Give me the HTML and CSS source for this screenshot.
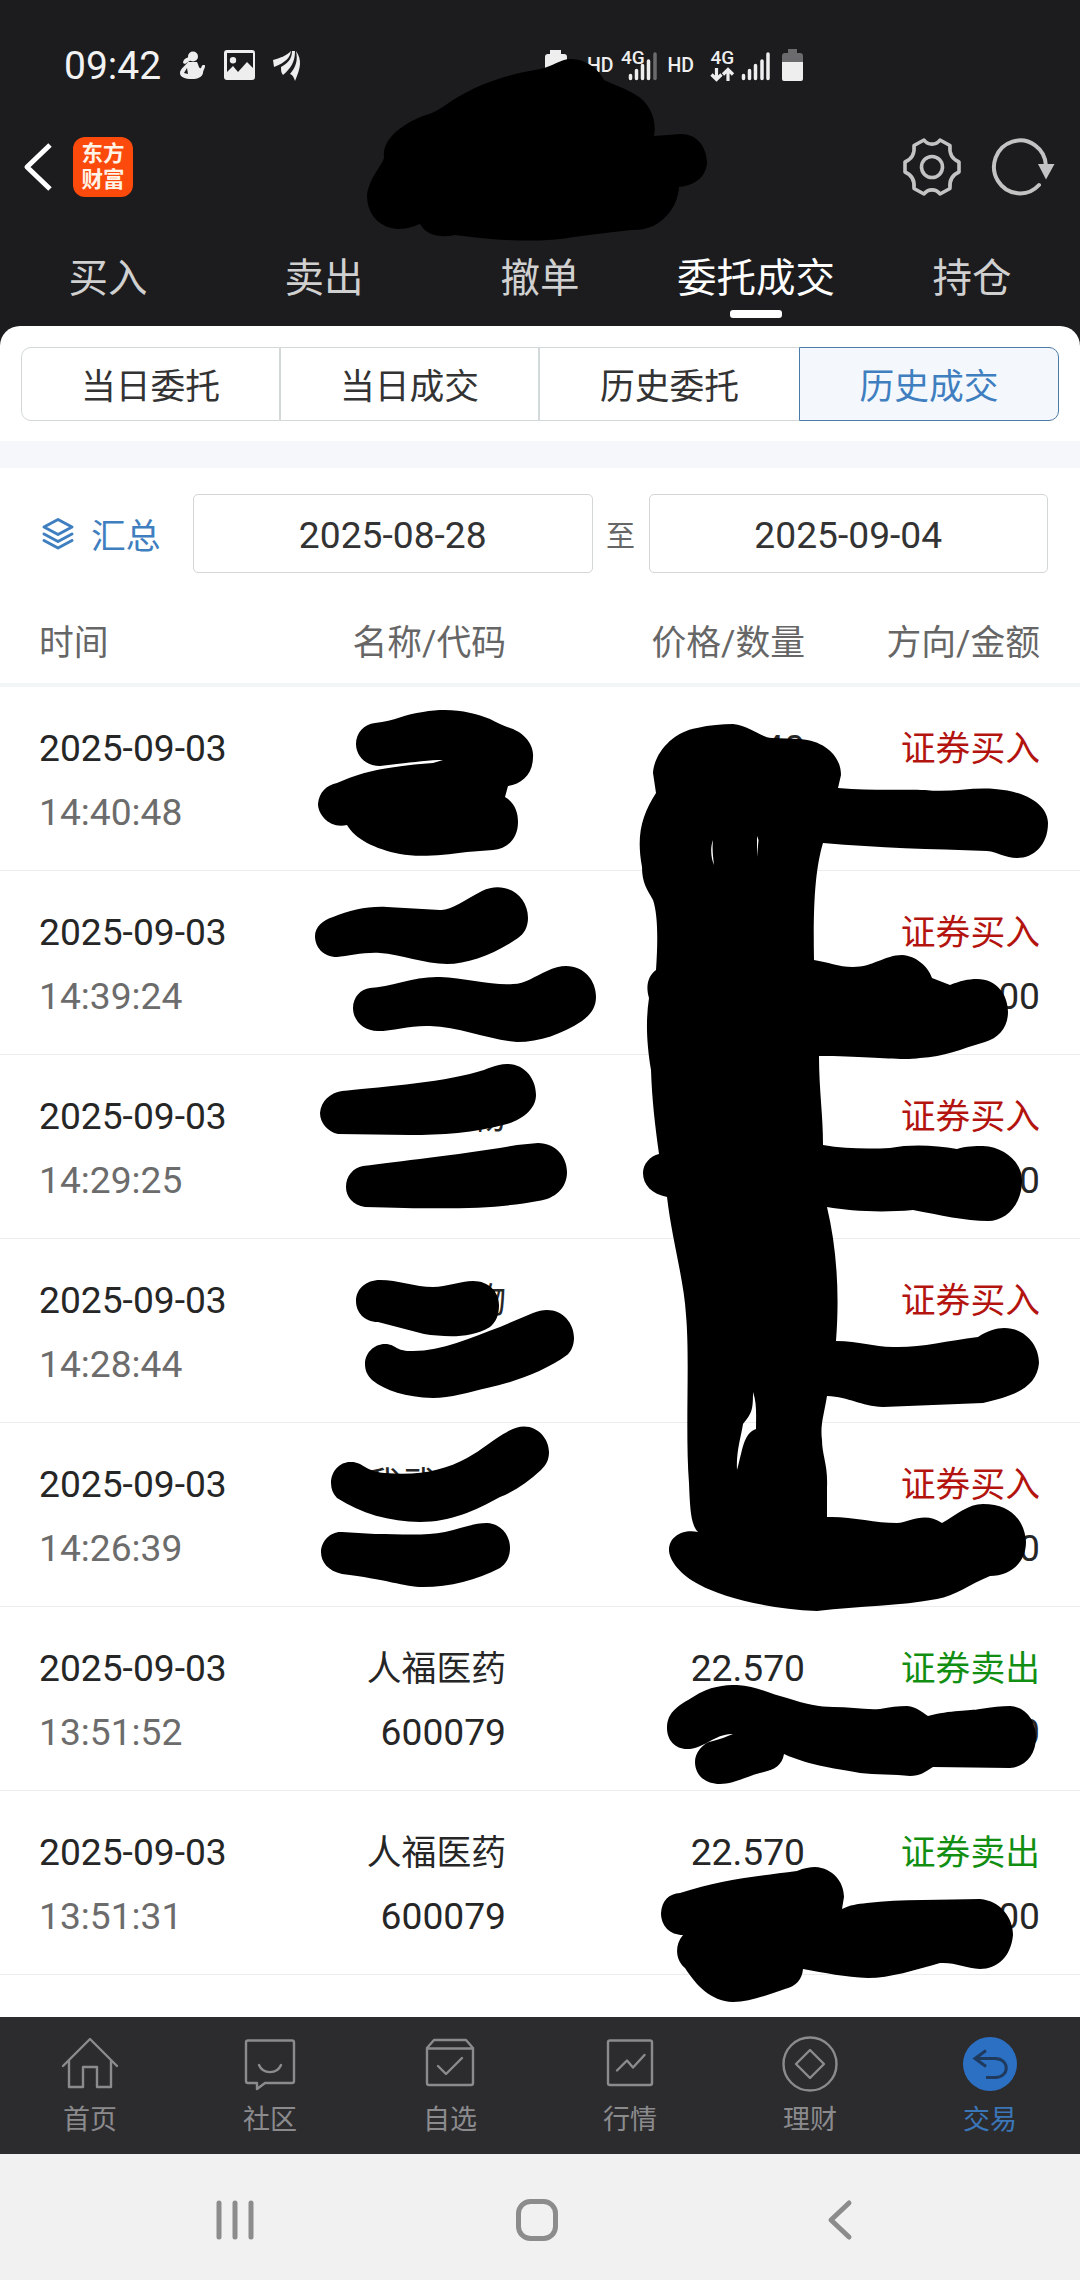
FILE: index.html
```html
<!DOCTYPE html>
<html lang="zh-CN">
<head>
    <meta charset="UTF-8">
    <meta name="viewport" content="width=device-width, initial-scale=1.0">
    <title>历史成交</title>
    <link rel="stylesheet" href="styles.css">
</head>
<body>
    <div class="screen">
        <div class="top">
            <div class="status-bar">
                <span class="clock">09:42</span>
                <svg class="status-left" width="124" height="36" viewBox="178 48 124 36">
                    <g fill="#eeeeee">
                        <circle cx="193" cy="56.500" r="5"/>
                        <path d="M189 57c-4 1-6 3-6 6l2 1 6-4z"/>
                        <path fill-rule="evenodd" d="M188 62h9c2 4 2 7 4 6 1-1 0-3 3-3s-1 5-1 8c-1 4-5 6-11 6-7 0-12-2-12-6 0-4 5-7 8-11zM187 68l-3 5 4 1z"/>
                        <path fill-rule="evenodd" d="M227 50h25q3 0 3 3v24q0 3-3 3h-25q-3 0-3-3V53q0-3 3-3zm0 3v19l6-6 5 6 9-10 6 6V53zM233 57a3.200 3.200 0 1 1 0 6.400a3.200 3.200 0 1 1 0-6.400z"/>
                        <path d="M273 60c7-2 13-4 18-9-1 7-5 11-17 16z"/>
                        <path d="M281 67c7-4 11-8 11-16l3 0c0 11-4 17-12 24-2-2-2-5-2-8z"/>
                        <path d="M296 51c6 9 5 16-1 30-1-3-2-6-5-7 6-7 8-14 6-23z"/>
                    </g>
                </svg>
                <svg class="status-right" width="266" height="36" viewBox="540 48 266 36">
                    <path fill="#eeeeee" d="M550 50h11v4h3q3 0 3 3v12h-22V57q0-3 3-3h2z"/>
                    <g class="status-text">
                        <text x="587" y="72" font-size="19.500">HD</text>
                        <text x="621" y="63.500" font-size="19">4G</text>
                        <text x="667.500" y="72" font-size="19.500">HD</text>
                        <text x="710.500" y="63.500" font-size="19">4G</text>
                    </g>
                    <path fill="none" stroke="#eeeeee" stroke-width="3.500" stroke-linecap="round" d="M630.500 75.500v3M636.500 70.500v8M642.500 65.500v13M648.500 61v17.500M743.500 75.500v3M749.500 70.500v8M755.500 65.500v13M762 61v17.500M768 54v24.500"/>
                    <path stroke="#6b6b6d" stroke-width="3.500" stroke-linecap="round" d="M655 54v24.500"/>
                    <path fill="none" stroke="#eeeeee" stroke-width="3.200" d="M716.500 68v11M711.500 74.500l5 5 5-5M728 81V70M723 74.500l5-5 5 5"/>
                    <path fill="#6b6b6d" d="M788 49h9v4h3q3 0 3 3v7h-21v-7q0-3 3-3h3z"/>
                    <path fill="#eeeeee" d="M782 62h21v17q0 2-2 2h-17q-2 0-2-2z"/>
                </svg>
            </div>
            <div class="title-bar">
                <svg width="30" height="52" viewBox="23 141 30 52">
                    <path fill="none" stroke="#ffffff" stroke-width="5" stroke-linejoin="round" d="M50 145L27 167l23 22"/>
                </svg>
                <div class="logo"><span>东方</span><span>财富</span></div>
                <svg class="gear" width="62" height="62" viewBox="-31 -31 62 62">
                    <g fill="none" stroke="#c3c3c3" stroke-width="3.600" stroke-linejoin="round">
                        <path d="M-8-27C-4-21.500 4-21.500 8-27L18-21.500C17-13 20-8 27-5V5C20 8 17 13 18 21.500L8 27C4 21.500-4 21.500-8 27L-18 21.500C-17 13-20 8-27 5V-5C-20-8-17-13-18-21.500Z"/>
                        <circle r="10.500"/>
                    </g>
                </svg>
                <svg class="refresh" width="66" height="62" viewBox="-31 -31 66 62">
                    <path fill="none" stroke="#c3c3c3" stroke-width="4" stroke-linecap="round" d="M26-1A26 26.500 0 1 0 19 18"/>
                    <path fill="#c3c3c3" d="M18-3h16.500L26 12.500z"/>
                </svg>
            </div>
            <div class="tabs">
                <div class="tab">买入</div>
                <div class="tab">卖出</div>
                <div class="tab">撤单</div>
                <div class="tab active">委托成交</div>
                <div class="tab">持仓</div>
            </div>
        </div>

        <div class="panel">
            <div class="segments">
                <div class="segment">当日委托</div>
                <div class="segment">当日成交</div>
                <div class="segment">历史委托</div>
                <div class="segment active">历史成交</div>
            </div>
        </div>
        <div class="strip"></div>

        <div class="filter">
            <svg width="34" height="34" viewBox="0 0 34 34">
                <path fill="none" stroke="#3f7fc0" stroke-width="3" stroke-linejoin="round" stroke-linecap="round" d="M17 2.500L31 10 17 17.500 3 10zM3 17l14 7.500L31 17M3 23.500L17 31l14-7.500"/>
            </svg>
            <span class="summary">汇总</span>
            <div class="date-box">2025-08-28</div>
            <span class="to">至</span>
            <div class="date-box">2025-09-04</div>
        </div>

        <div class="list-head">
            <span>时间</span>
            <span>名称/代码</span>
            <span>价格/数量</span>
            <span>方向/金额</span>
        </div>

        <div class="list">
            <div class="row">
                <div class="cell"><p>2025-09-03</p><p class="time">14:40:48</p></div>
                <div class="cell"></div>
                <div class="cell"><p>40</p></div>
                <div class="cell"><p class="buy">证券买入</p></div>
            </div>
            <div class="row">
                <div class="cell"><p>2025-09-03</p><p class="time">14:39:24</p></div>
                <div class="cell"></div>
                <div class="cell"></div>
                <div class="cell"><p class="buy">证券买入</p><p>00</p></div>
            </div>
            <div class="row">
                <div class="cell"><p>2025-09-03</p><p class="time">14:29:25</p></div>
                <div class="cell"><p class="cn">物</p></div>
                <div class="cell"></div>
                <div class="cell"><p class="buy">证券买入</p><p>0</p></div>
            </div>
            <div class="row">
                <div class="cell"><p>2025-09-03</p><p class="time">14:28:44</p></div>
                <div class="cell"><p class="cn">物</p></div>
                <div class="cell"></div>
                <div class="cell"><p class="buy">证券买入</p></div>
            </div>
            <div class="row">
                <div class="cell"><p>2025-09-03</p><p class="time">14:26:39</p></div>
                <div class="cell"><p class="cn lead">我武</p></div>
                <div class="cell"></div>
                <div class="cell"><p class="buy">证券买入</p><p>0</p></div>
            </div>
            <div class="row">
                <div class="cell"><p>2025-09-03</p><p class="time">13:51:52</p></div>
                <div class="cell"><p class="cn">人福医药</p><p>600079</p></div>
                <div class="cell"><p>22.570</p></div>
                <div class="cell"><p class="sell">证券卖出</p><p>0</p></div>
            </div>
            <div class="row">
                <div class="cell"><p>2025-09-03</p><p class="time">13:51:31</p></div>
                <div class="cell"><p class="cn">人福医药</p><p>600079</p></div>
                <div class="cell"><p>22.570</p></div>
                <div class="cell"><p class="sell">证券卖出</p><p>00</p></div>
            </div>
        </div>

        <div class="bottom-nav">
            <div class="nav-item">
                <svg width="60" height="60" viewBox="-30 -30 60 60">
                    <path d="M-27 2L0-25 27 2M-21-3V23H-7V3H7V23H21V-3"/>
                </svg>
                <span>首页</span>
            </div>
            <div class="nav-item">
                <svg width="60" height="60" viewBox="-30 -30 60 60">
                    <path d="M-22-23.500H22q2 0 2 2V17q0 2-2 2H-5l-8 6v-6H-22q-2 0-2-2V-21.500q0-2 2-2zM-11 1C-7 10.500 7 10.500 11 1"/>
                </svg>
                <span>社区</span>
            </div>
            <div class="nav-item">
                <svg width="60" height="60" viewBox="-30 -30 60 60">
                    <path d="M-23-16V19q0 2 2 2H21q2 0 2-2V-16L16-24H-16zM-23-15.500H23M-12 2L-4 10 12-6"/>
                </svg>
                <span>自选</span>
            </div>
            <div class="nav-item">
                <svg width="60" height="60" viewBox="-30 -30 60 60">
                    <path d="M-20-23.500H20q2 0 2 2V19q0 2-2 2H-20q-2 0-2-2V-21.500q0-2 2-2zM-13 6.500L-3-3.500 3 3.500 14.500-9"/>
                </svg>
                <span>行情</span>
            </div>
            <div class="nav-item">
                <svg width="60" height="60" viewBox="-30 -30 60 60">
                    <circle cy="0" r="26.500"/>
                    <path d="M0-14L14 0 0 14-14 0z"/>
                </svg>
                <span>理财</span>
            </div>
            <div class="nav-item active">
                <svg width="60" height="60" viewBox="-30 -30 60 60">
                    <circle class="disc" cy="0" r="27"/>
                    <path class="arrow" d="M-4-13.500L-15-5.500-4 2.500M-15-5.500H5C20-5.500 20 13.500 5 13.500H-4"/>
                </svg>
                <span>交易</span>
            </div>
        </div>

        <div class="system-nav">
            <svg width="44" height="44" viewBox="-22 -22 44 44">
                <path d="M-16-17V17M0-17V17M16-17V17"/>
            </svg>
            <svg width="44" height="44" viewBox="-22 -22 44 44">
                <rect x="-18.500" y="-18.500" width="37" height="37" rx="12"/>
            </svg>
            <svg width="44" height="44" viewBox="-22 -22 44 44">
                <path d="M10-17L-8 0 10 17"/>
            </svg>
        </div>

        <!-- marker strokes hiding private values -->
        <svg class="marker" width="1080" height="2280" viewBox="0 0 1080 2280">
            <path d="M540 69C500 76 478 85 458 97C446 104 440 110 429 114C398 124 382 142 384 157C384 164 370 175 367 195C367 220 386 229 399 229C408 229 414 226 420 224C427 236 441 238 455 235C499 241 540 243 574 237C594 234 615 232 631 230C660 232 678 208 679 187C700 185 707 172 707 162C706 145 696 134 681 134L654 136C657 120 650 103 636 95C625 88 612 84 604 80C598 68 585 59 571 59C560 59 552 67 540 69Z"/>
            <path d="M375 723C395 721 405 714 423 712C450 707 473 712 490 719C496 722 504 726 510 728C528 734 534 748 533 757C533 774 522 784 508 786L505 797C515 803 518 813 518 822C518 838 508 849 493 850L467 852C440 856 415 857 400 854C375 849 355 839 347 825C330 829 318 815 318 804C319 792 327 785 337 783C360 773 380 767 433 763L443 760C425 760 400 764 380 766C366 766 356 756 356 744C356 733 364 724 375 723Z"/>
            <path d="M333 917C350 910 368 906 387 907L440 910C450 911 465 900 482 891C505 880 528 895 528 918C528 927 524 934 518 938C495 954 468 964 447 964C425 964 400 954 380 953C365 952 348 956 337 957C323 957 315 947 315 936C315 927 323 920 333 917Z"/>
            <path d="M370 988C390 987 415 976 440 977C465 978 495 986 513 984C525 984 535 976 547 971C575 957 596 975 596 997C596 1008 590 1015 582 1021C562 1034 540 1042 517 1042C490 1040 460 1027 430 1026C412 1025 393 1031 378 1031C363 1031 353 1020 353 1008C353 997 361 989 370 988Z"/>
            <path d="M342 1091C370 1088 440 1083 477 1072C486 1070 496 1064 507 1064C525 1064 536 1079 536 1095C536 1108 524 1119 507 1124C475 1133 440 1135 410 1135L338 1134C328 1132 320 1123 320 1113C321 1101 330 1093 342 1091Z"/>
            <path d="M363 1166C400 1161 460 1155 517 1145L538 1143C556 1143 567 1157 567 1172C567 1188 555 1199 538 1201C500 1208 460 1210 365 1207C353 1205 346 1197 346 1187C346 1176 353 1168 363 1166Z"/>
            <path d="M380 1280C398 1280 415 1287 433 1287C447 1287 460 1281 473 1281C489 1281 499 1292 499 1305C499 1315 496 1322 490 1327C470 1339 445 1337 424 1334L378 1322C364 1322 356 1312 356 1301C356 1289 366 1280 380 1280Z"/>
            <path d="M385 1344C395 1344 396 1351 410 1351C440 1352 470 1338 500 1327L533 1313C557 1303 574 1320 574 1338C574 1345 571 1352 567 1355C545 1371 515 1382 487 1388C470 1392 450 1398 433 1398C405 1397 386 1391 372 1380C367 1375 365 1370 365 1364C365 1353 374 1344 385 1344Z"/>
            <path d="M350 1462C362 1461 366 1472 385 1473C420 1476 445 1470 467 1458C482 1450 495 1438 507 1432C530 1417 549 1435 549 1452C549 1460 546 1465 541 1470C528 1482 515 1491 500 1497C475 1511 450 1522 420 1522C390 1522 360 1513 337 1498C333 1494 331 1489 331 1483C331 1471 340 1462 350 1462Z"/>
            <path d="M342 1532L375 1534C400 1534 425 1536 445 1532C460 1529 473 1523 487 1523C502 1524 510 1536 510 1548C510 1557 506 1564 500 1568C477 1580 450 1587 423 1587C405 1587 385 1579 342 1574C328 1571 321 1562 321 1552C321 1541 331 1531 342 1532Z"/>
            <path fill-rule="evenodd" d="M653 773C654 754 672 732 697 728C710 725 722 724 733 724C750 726 760 737 772 738L800 739C826 741 841 757 841 775L838 788C875 791 905 789 925 790C950 793 970 787 995 789C1033 792 1048 809 1048 823C1048 845 1034 858 1017 858C1005 858 998 852 987 851C930 849 880 848 823 843C815 870 813 905 814 960C828 962 838 967 853 967C873 967 885 955 902 955C916 956 928 966 932 978L950 985C960 981 968 979 977 979C997 979 1008 995 1008 1012C1008 1027 999 1038 985 1042C960 1049 945 1057 920 1058C900 1061 870 1056 819 1056C819 1090 823 1115 823 1145C845 1149 870 1149 890 1148C910 1144 935 1145 957 1149C966 1146 975 1146 983 1146C1005 1147 1022 1163 1022 1180C1022 1205 1006 1221 988 1221C965 1221 940 1215 913 1210C880 1213 850 1211 827 1207C836 1245 840 1290 836 1341C860 1341 873 1347 893 1347C920 1348 945 1341 978 1337C1010 1315 1039 1337 1039 1363C1037 1387 1015 1396 983 1403L883 1407C860 1406 850 1397 827 1396C824 1415 820 1425 822 1440C822 1455 828 1465 827 1487V1517C850 1516 875 1523 897 1523C910 1522 925 1511 942 1523C956 1515 968 1504 983 1504C1012 1504 1025 1522 1026 1542C1026 1563 1010 1576 990 1576C970 1584 955 1596 937 1599C900 1606 860 1606 817 1611C765 1609 720 1596 700 1585C680 1575 669 1560 669 1550C669 1537 682 1529 698 1532C691 1525 690 1510 689 1483C685 1430 690 1360 686 1315C684 1280 672 1240 667 1197C652 1194 643 1185 643 1173C643 1164 650 1156 659 1154C655 1125 652 1100 651 1070C646 1040 646 1018 649 998C645 985 649 975 656 970C658 940 658 915 653 900C647 889 642 883 642 867C636 835 642 815 656 793Z
                M713 840C710 848 711 858 714 865C713 856 712 849 713 840ZM757 836V857L758.500 840ZM753 1392C757 1403 756 1416 756 1429C743 1434 743 1449 737 1470C736 1452 741 1437 743 1424C752 1413 753 1410 753 1392Z"/>
            <path d="M667 1728C667 1711 680 1705 693 1697C710 1686 724 1685 737 1685C757 1686 772 1695 787 1698C805 1704 820 1707 833 1707C850 1707 865 1710 880 1709C890 1707 898 1706 907 1706C917 1707 923 1713 928 1716C950 1710 970 1711 980 1709C992 1707 1002 1706 1010 1706C1027 1707 1036 1722 1036 1737C1036 1755 1025 1767 1010 1768L933 1767C925 1772 920 1776 910 1776C895 1774 875 1775 860 1773C840 1769 810 1766 784 1754C782 1766 774 1770 760 1773C745 1777 733 1784 720 1784C705 1784 695 1775 695 1762C695 1753 702 1743 713 1741C720 1739 726 1737 733 1734C716 1733 704 1749 687 1749C675 1749 667 1740 667 1728Z"/>
            <path d="M661 1913C662 1900 669 1894 680 1893C720 1880 750 1877 797 1871C804 1868 810 1867 815 1867C833 1868 844 1882 844 1897L842 1909C850 1905 857 1904 867 1903C900 1899 945 1900 980 1899C1001 1901 1013 1918 1013 1935C1011 1957 997 1969 980 1969C965 1968 955 1962 940 1963C915 1970 890 1978 868 1978C845 1977 825 1973 803 1969C802 1980 796 1986 785 1989C767 1995 750 2002 733 2002C710 2001 696 1985 685 1968C677 1962 673 1947 683 1935C670 1935 661 1926 661 1913Z"/>
        </svg>
    </div>
</body>
</html>
```
FILE: styles.css
```css
* {
    box-sizing: border-box;
}

body {
    margin: 0;
    font-family: Roboto, "Noto Sans CJK SC", sans-serif;
    background-color: #ffffff;
    color: #262626;
}

p {
    margin: 0;
}

svg {
    display: block;
    flex: none;
    overflow: visible;
}

.screen {
    position: relative;
    width: 1080px;
    height: 2280px;
    display: flex;
    flex-direction: column;
    overflow: hidden;
}

/* dark header */
.top {
    height: 346px;
    margin-bottom: -20px;
    background-color: #1c1c1e;
}

.status-bar {
    height: 132px;
    padding-left: 64px;
    display: flex;
    align-items: center;
}

.clock {
    width: 114px;
    font-size: 39px;
    color: #f2f2f2;
}

.status-right {
    margin-left: 238px;
}

.status-text {
    fill: #eeeeee;
    font-weight: 500;
}

.title-bar {
    height: 70px;
    padding-left: 23px;
    display: flex;
    align-items: center;
}

.logo {
    width: 60px;
    height: 60px;
    margin-left: 20px;
    padding-top: 4px;
    border-radius: 12px;
    background-color: #fb4a0c;
    color: #fff3e8;
    font-size: 21.5px;
    font-weight: 700;
    line-height: 26px;
    text-align: center;
}

.logo span {
    display: block;
}

.gear {
    margin-left: 768px;
}

.refresh {
    margin-left: 26px;
}

.tabs {
    height: 124px;
    display: flex;
}

.tab {
    flex: 1;
    display: flex;
    flex-direction: column;
    align-items: center;
    padding-top: 52px;
    font-size: 39.5px;
    line-height: 50px;
    color: #d0d0d0;
}

.tab.active {
    color: #ffffff;
}

.tab.active::after {
    content: "";
    width: 52px;
    height: 8px;
    margin-top: 6px;
    border-radius: 3px;
    background-color: #ffffff;
}

/* sub tabs */
.panel {
    height: 115px;
    padding: 21px 21px 0;
    border-radius: 20px 20px 0 0;
    background-color: #ffffff;
}

.segments {
    display: grid;
    grid-template-columns: 259px 259px 260px 260px;
    height: 74px;
}

.segment {
    display: flex;
    align-items: center;
    justify-content: center;
    border: 1px solid #d3d8d8;
    font-size: 34.8px;
    color: #333333;
}

.segment:first-child {
    border-radius: 10px 0 0 10px;
}

.segment:nth-child(3) {
    border-right: none;
}

.segment.active {
    border-color: #4a7ba6;
    border-radius: 0 10px 10px 0;
    background-color: #f4f8fd;
    color: #3f7fc0;
}

.strip {
    height: 27px;
    background-color: #f6f7fa;
}

/* date filter */
.filter {
    height: 131px;
    padding: 0 32px 0 41px;
    display: flex;
    align-items: center;
}

.summary {
    width: 102px;
    margin-left: 16px;
    font-size: 34.8px;
    color: #3f7fc0;
}

.date-box {
    flex: 1;
    height: 79px;
    border: 1px solid #d3d6d6;
    border-radius: 5px;
    font-size: 37.2px;
    line-height: 80px;
    text-align: center;
    color: #333333;
}

.to {
    width: 56px;
    font-size: 29px;
    text-align: center;
    color: #666666;
}

/* trade list */
.list-head,
.row {
    display: grid;
    grid-template-columns: 227px 240px 299px 235px;
    padding-left: 39px;
}

.list-head {
    height: 88px;
    padding-top: 19px;
    border-bottom: 4px solid #f3f6f7;
    font-size: 34.8px;
    line-height: 50px;
    color: #666666;
}

.list-head span + span,
.cell + .cell {
    text-align: right;
}

.row {
    height: 184px;
    padding-top: 29px;
    border-bottom: 1px solid #ececec;
}

.cell p {
    height: 64px;
    font-size: 37.2px;
    line-height: 64px;
    white-space: nowrap;
}

.cell .time {
    color: #6c6c6c;
}

.cell .cn,
.cell .buy,
.cell .sell {
    font-size: 34.8px;
    line-height: 66px;
}

.cell .lead {
    padding-right: 70px;
}

.cell .buy {
    color: #b3140f;
}

.cell .sell {
    color: #128f12;
}

.list {
    height: 1330px;
}

.bottom-nav {
    height: 137px;
    display: flex;
    background-color: #2c2c2e;
}

.nav-item {
    flex: 1;
    display: flex;
    flex-direction: column;
    align-items: center;
    padding-top: 17px;
    font-size: 27px;
    line-height: 52px;
    color: #8b8b8e;
}

.nav-item svg {
    fill: none;
    stroke: #8b8b8e;
    stroke-width: 2.4;
    stroke-linejoin: round;
    stroke-linecap: round;
}

.nav-item.active {
    color: #3a76b8;
}

.nav-item .disc {
    fill: #2c70c4;
    stroke: none;
}

.nav-item .arrow {
    stroke: #1f3a5c;
    stroke-width: 3;
    stroke-linecap: butt;
    stroke-linejoin: miter;
}

.system-nav {
    height: 126px;
    padding: 6px 219px 0 213px;
    display: flex;
    align-items: center;
    justify-content: space-between;
    background-color: #f1f1f1;
}

.system-nav svg {
    fill: none;
    stroke: #8c8c8c;
    stroke-width: 5;
    stroke-linecap: round;
    stroke-linejoin: round;
}

.marker {
    position: absolute;
    top: 0;
    left: 0;
    fill: #000000;
}
```
